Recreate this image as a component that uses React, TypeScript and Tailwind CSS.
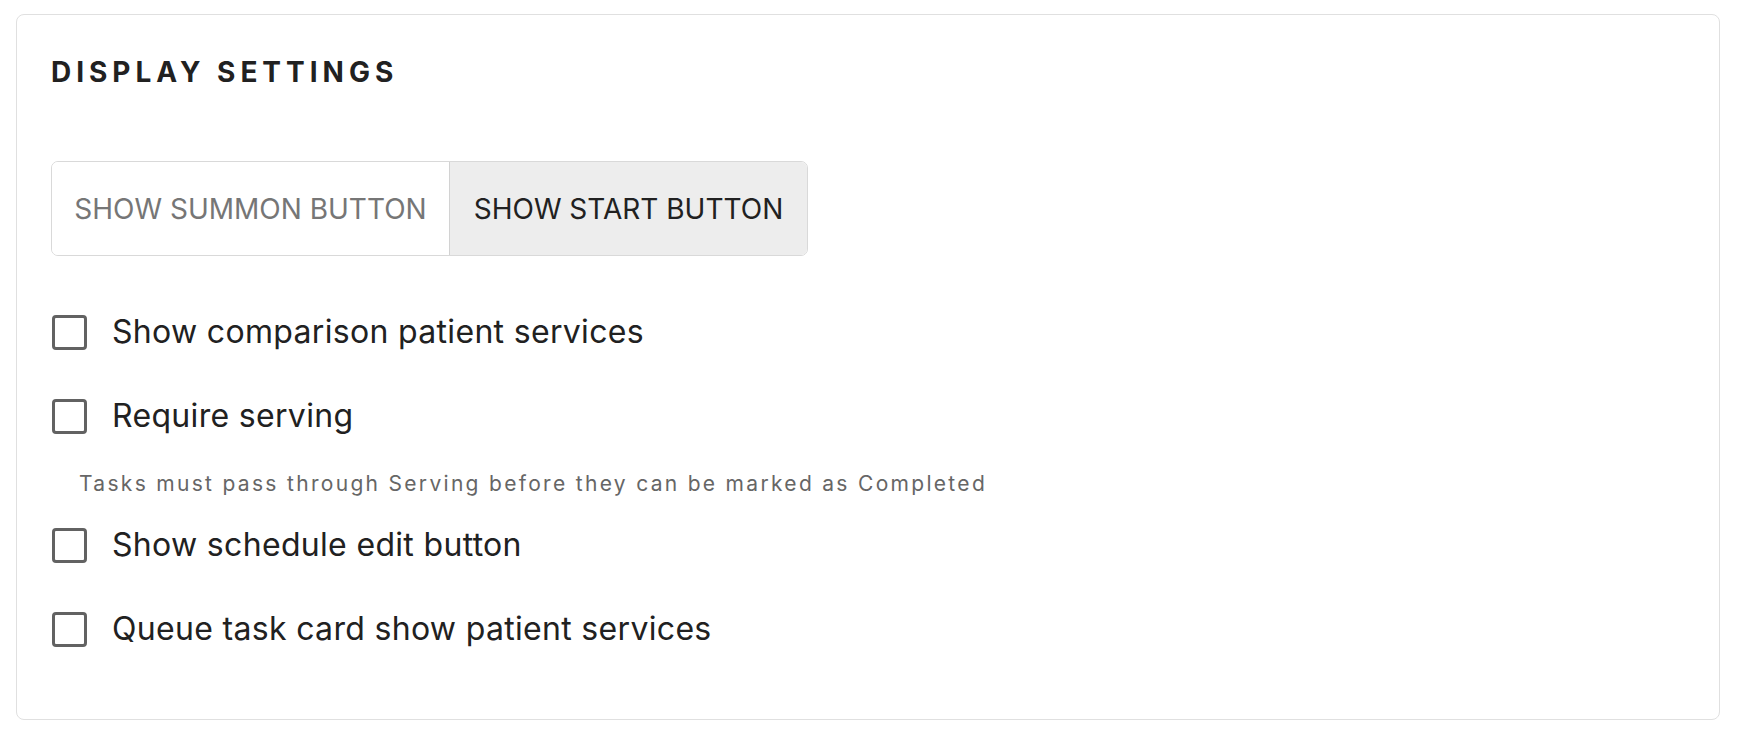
import React from 'react';

export default function App() {
  const options = [
    { label: 'Show comparison patient services' },
    { label: 'Require serving', helper: 'Tasks must pass through Serving before they can be marked as Completed' },
    { label: 'Show schedule edit button' },
    { label: 'Queue task card show patient services' },
  ];

  return (
    <div className="min-h-screen bg-white pl-[16px] pr-[18px] pt-[14px] font-['Inter',sans-serif] text-[#212121]">
      <div className="h-[706px] rounded-[8px] border border-[#e0e0e0] pl-[34px] pt-[36px]">
        <h2 className="text-[28px] font-bold leading-[42px] tracking-[0.178em] text-[#212121]">
          DISPLAY SETTINGS
        </h2>

        <div className="mt-[68px] flex w-fit overflow-hidden rounded-[7px] border border-[#d9d9d9]">
          <button className="h-[93px] w-[397px] bg-white text-[28px] leading-none text-[#767676]">
            SHOW SUMMON BUTTON
          </button>
          <button className="h-[93px] w-[358px] border-l border-[#d2d2d2] bg-[#ededed] text-[28px] leading-none text-[#212121]">
            SHOW START BUTTON
          </button>
        </div>

        <div className="mt-[34px] flex flex-col">
          {options.map((opt, i) => (
            <div key={i}>
              <label className="flex h-[84px] items-center">
                <span className="ml-[1px] h-[35px] w-[35px] rounded-[4px] border-[3px] border-[#626262] bg-white"></span>
                <span className="ml-[25px] text-[32px] leading-none tracking-[0.01em] text-[#212121]">{opt.label}</span>
              </label>
              {opt.helper && (
                <p className="ml-[28px] pb-[4px] pt-[11px] text-[21px] leading-[30px] tracking-[0.11em] text-[#666666]">
                  {opt.helper}
                </p>
              )}
            </div>
          ))}
        </div>
      </div>
    </div>
  );
}
